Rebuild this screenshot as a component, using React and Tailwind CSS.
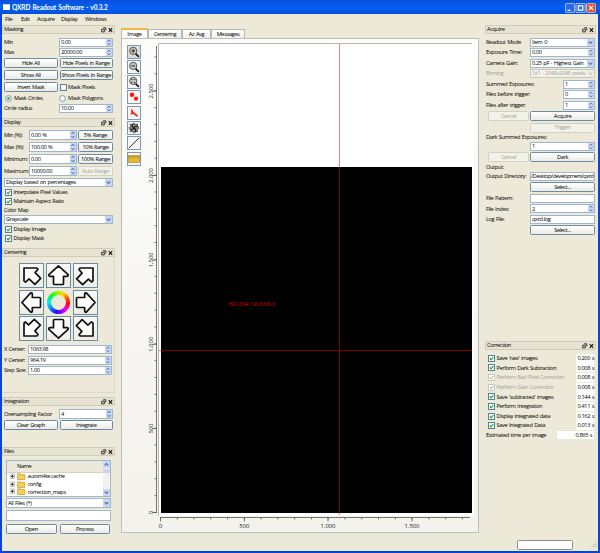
import React from "react";

const edge = "border border-[#9fb6cc]";

function Spin({ value, className = "" }) {
  return (
    <div className={`flex h-[9px] items-center bg-white ${edge} ${className}`}>
      <span className="min-w-0 flex-1 pl-px">{value}</span>
      <svg className="h-full w-[6px] shrink-0 bg-[#c6d5fa]" viewBox="0 0 6 8">
        <path d="M1.5 3 3 1.2 4.5 3M1.5 5 3 6.8 4.5 5" fill="none" stroke="#4d6185" strokeWidth="0.9" />
      </svg>
    </div>
  );
}

function Combo({ value, disabled, className = "" }) {
  return (
    <div
      className={`flex h-[9px] items-center border ${
        disabled ? "border-[#c9c7ba] bg-[#f3f2ea] text-[#a5a399]" : "border-[#9fb6cc] bg-white"
      } ${className}`}
    >
      <span className="min-w-0 flex-1 pl-px">{value}</span>
      <svg className={`h-full w-[7px] shrink-0 ${disabled ? "bg-[#eeede4]" : "bg-[#c6d5fa]"}`} viewBox="0 0 7 7">
        <path d="M1.7 2.5 3.5 4.5 5.3 2.5" fill="none" stroke={disabled ? "#c0beb0" : "#4d6185"} strokeWidth="1.1" />
      </svg>
    </div>
  );
}

function Button({ children, disabled, className = "" }) {
  return (
    <div
      className={`flex h-[10px] items-center justify-center rounded-[1.5px] border pt-px ${
        disabled
          ? "border-[#d3d0c1] bg-[#f3f2e9] text-[#a5a399]"
          : "border-[#6c8ba6] bg-gradient-to-b from-white to-[#ecebe3]"
      } ${className}`}
    >
      {children}
    </div>
  );
}

function Check({ children, checked = true, disabled, className = "" }) {
  return (
    <div className={`flex items-center gap-[1.5px] ${disabled ? "text-[#a5a399]" : ""} ${className}`}>
      <svg className="h-[7px] w-[7px] shrink-0" viewBox="0 0 7 7">
        <rect x="0.5" y="0.5" width="6" height="6" fill="#fff" stroke={disabled ? "#cbc9bb" : "#5580a0"} />
        {checked && (
          <path d="M1.8 3.4 3.1 4.8 5.3 2" fill="none" stroke={disabled ? "#bcbab0" : "#21a121"} strokeWidth="1.2" />
        )}
      </svg>
      <span>{children}</span>
    </div>
  );
}

function Radio({ children, checked, className = "" }) {
  return (
    <div className={`flex items-center gap-[2px] ${className}`}>
      <svg className="h-[7px] w-[7px] shrink-0" viewBox="0 0 7 7">
        <circle cx="3.5" cy="3.5" r="2.9" fill="#fff" stroke="#5580a0" strokeWidth="0.8" />
        {checked && <circle cx="3.5" cy="3.5" r="1.4" fill="#35b235" />}
      </svg>
      <span>{children}</span>
    </div>
  );
}

function Dock({ title, className = "", children }) {
  return (
    <section className={`flex shrink-0 flex-col ${className}`}>
      <div className="flex h-[9px] shrink-0 items-center border border-[#cfccbb] bg-[#e6e3d3] pl-px pr-[1px]">
        <span className="flex-1">{title}</span>
        <svg className="h-[6px] w-[12px]" viewBox="0 0 12 6">
          <path d="M2.2 .8H4.8V3.4M.7 2.2H3.3V4.9H.7Z" fill="none" stroke="#222" strokeWidth="0.9" />
          <path d="M7.8 1.2 11.2 4.8M11.2 1.2 7.8 4.8" stroke="#111" strokeWidth="1.1" />
        </svg>
      </div>
      {children}
    </section>
  );
}

function Arrow({ angle }) {
  return (
    <div className="flex h-[25px] w-[25px] items-center justify-center border border-[#6c8ba6] bg-gradient-to-b from-[#f8f8f5] to-[#eeede6]">
      <svg className="h-[23px] w-[23px]" viewBox="-11.5 -11.5 23 23">
        <path
          transform={`rotate(${angle})`}
          d="M0-9.6 9.6-.8Q10 .6 8.6 .8H5V8Q5 9 4 9H-4Q-5 9-5 8V.8H-8.6Q-10 .6-9.6-.8Z"
          fill="#fff"
          stroke="#111"
          strokeWidth="1.7"
          strokeLinejoin="round"
        />
      </svg>
    </div>
  );
}

function DiagonalArrow({ angle }) {
  return (
    <div className="flex h-[25px] w-[25px] items-center justify-center border border-[#6c8ba6] bg-gradient-to-b from-[#f8f8f5] to-[#eeede6]">
      <svg className="h-[23px] w-[23px]" viewBox="-11.5 -11.5 23 23">
        <path
          transform={`rotate(${angle})`}
          d="M-7.5-7.5H5.3L6.5-6.3 3.6-2.9 9.2 2.8 3.4 8.9-2.4 3.4-6 6.6-7.5 5.4Z"
          fill="#fff"
          stroke="#111"
          strokeWidth="1.7"
          strokeLinejoin="round"
        />
      </svg>
    </div>
  );
}

function Tool({ active, children }) {
  return (
    <div className={`h-[14px] w-[14px] border border-[#7c9ab5] ${active ? "bg-[#deddd3]" : "bg-[#f6f5f1]"}`}>
      <svg className="h-[12px] w-[12px]" viewBox="0 0 12 12">
        {children}
      </svg>
    </div>
  );
}

function Lens({ children }) {
  return (
    <>
      <path d="M7.3 7.3 10.8 10.8" stroke="#1a1a1a" strokeWidth="1.8" />
      <circle cx="5.2" cy="4.9" r="3.6" fill="#c9cac6" stroke="#4a4a4a" strokeWidth="0.9" />
      <g stroke="#111" strokeWidth="0.9">{children}</g>
    </>
  );
}

const yMajor = [
  [91, "2,500"],
  [175.5, "2,000"],
  [260, "1,500"],
  [344.3, "1,000"],
  [428.6, "500"],
  [512.5, "0"],
];
const yMinor = Array.from({ length: 28 }, (_, i) => 512.5 - i * 16.87);
const xMajor = [
  [160.5, "0"],
  [244.3, "500"],
  [328, "1.000"],
  [412, "1.500"],
];
const xMinor = Array.from({ length: 19 }, (_, i) => 160.5 + i * 16.77);

function Plot() {
  return (
    <svg
      className="h-[493px] w-[336px] shrink-0 tracking-[-0.1px] [word-spacing:normal]"
      viewBox="142 39 336 493"
    >
      <rect x="159" y="44" width="315" height="472" fill="#fff" />
      <path d="M158.5 516V43.5H472" fill="none" stroke="#b9b8ae" />
      <rect x="161" y="167" width="311" height="346" fill="#000" />
      <g stroke="#55544f" strokeWidth="0.8">
        <path d="M156.5 46V513M160.5 517.5H470" fill="none" />
        {yMinor.map((y) => (
          <path key={y} d={`M154.5 ${y}H156.5`} />
        ))}
        {yMajor.map(([y]) => (
          <path key={y} d={`M152.5 ${y}H156.5`} />
        ))}
        {xMinor.map((x) => (
          <path key={x} d={`M${x} 517.5V519.5`} />
        ))}
        {xMajor.map(([x]) => (
          <path key={x} d={`M${x} 517.5V521.5`} />
        ))}
      </g>
      <g fill="#222" fontSize="6" textAnchor="middle">
        {yMajor.map(([y, t]) => (
          <text key={t} transform={`translate(153.3 ${y}) rotate(-90)`}>
            {t}
          </text>
        ))}
        {xMajor.map(([x, t]) => (
          <text key={t} x={x} y="527.5">
            {t}
          </text>
        ))}
      </g>
      <path d="M339.5 44V167" stroke="#f08484" />
      <path d="M339.5 167V513M161 350.5H472" stroke="#7d0000" />
      <path d="M339.5 513V515M159 350.5H161" stroke="#f08484" />
      <text x="228" y="306" className="tracking-normal" fill="#d80000" fontSize="5.7" textLength="47.5">
        390.804, 1203.68, 0
      </text>
    </svg>
  );
}

function Tab({ children, className = "" }) {
  return (
    <div
      className={`flex h-[9px] items-center justify-center border border-b-0 border-[#b5b9b4] bg-gradient-to-b from-white to-[#f0efe8] pt-px ${className}`}
    >
      {children}
    </div>
  );
}

function Folder({ name }) {
  return (
    <div className="flex h-[7.6px] items-center pl-[3px]">
      <svg className="h-[7px] w-[16px] shrink-0" viewBox="0 0 16 7">
        <path d="M0 1H4.4V5.6H0Z" fill="#fff" stroke="#999" strokeWidth="0.6" />
        <path d="M.8 3.3H3.8M2.3 1.8V4.8" stroke="#111" strokeWidth="0.9" />
        <path d="M7.6 6.5V.8H10.3L11.3 1.6H14.9V6.5Z" fill="#f3cf5d" stroke="#c89a2c" strokeWidth="0.7" />
      </svg>
      <span className="pl-[1.5px]">{name}</span>
    </div>
  );
}

const corrections = [
  ["Save 'raw' images", "0.200 s"],
  ["Perform Dark Subtraction", "0.008 s"],
  ["Perform Bad Pixel Correction", "0.008 s", true],
  ["Perform Gain Correction", "0.008 s", true],
  ["Save 'subtracted' images", "0.144 s"],
  ["Perform Integration", "0.411 s"],
  ["Display integrated data", "0.162 s"],
  ["Save Integrated Data", "0.013 s"],
];

export default function App() {
  return (
    <div className="flex h-[553px] w-[600px] flex-col overflow-hidden whitespace-nowrap bg-[#ece9d8] font-['Open_Sans','DejaVu_Sans',sans-serif] text-[5.7px] leading-none tracking-[-0.4px] text-black [word-spacing:0.6px]">
      <header className="flex h-[14px] shrink-0 items-center bg-gradient-to-b from-[#0a4fd8] via-[#0360f2] to-[#0550dd] pl-[3px] pr-[4px]">
        <svg className="h-[6px] w-[7px]" viewBox="0 0 7 6">
          <rect width="7" height="6" fill="#fff" />
          <rect width="7" height="1" fill="#bcd4ff" />
        </svg>
        <span className="flex-1 pl-[2px] pt-[2px] font-['Lato','DejaVu_Sans',sans-serif] text-[6.5px] font-bold tracking-[-0.07px] text-white">
          QXRD Readout Software - v0.3.2
        </span>
        <svg className="mt-[2px] h-[10px] w-[31px]" viewBox="0 0 31 10">
          <g stroke="#dfe9ff" strokeWidth="0.7">
            <rect x="0.4" y="0.4" width="9.2" height="9.2" rx="1" fill="#2d68e8" />
            <rect x="11" y="0.4" width="9.2" height="9.2" rx="1" fill="#2d68e8" />
            <rect x="21.5" y="0.4" width="9.2" height="9.2" rx="1" fill="#e2502c" />
          </g>
          <path d="M2.5 7.3H5.5M13.4 2.9H17.8V7.2H13.4ZM23.9 2.7 28.3 7.2M28.3 2.7 23.9 7.2" fill="none" stroke="#fff" strokeWidth="1.2" />
        </svg>
      </header>

      <div className="flex min-h-0 flex-1 flex-col border-x-2 border-b-2 border-[#0a46d6]">
        <nav className="flex h-[11px] shrink-0 items-center">
          <span className="w-[15px] pl-[3px]">File</span>
          <span className="w-[20px] pl-[4px]">Edit</span>
          <span className="w-[24px] pl-0">Acquire</span>
          <span className="w-[24px]">Display</span>
          <span>Windows</span>
        </nav>

        <main className="flex h-[513px] shrink-0">
          <aside className="flex w-[113px] shrink-0 flex-col [&_span]:pt-px">
            <Dock title="Masking" className="h-[93px]">
              <div className="flex flex-col pl-[2px] pr-[2px] pt-[3px]">
                <div className="flex h-[10px] items-center">
                  <span className="w-[55px]">Min</span>
                  <Spin value="0.00" className="flex-1" />
                </div>
                <div className="flex h-[11px] items-center">
                  <span className="w-[55px]">Max</span>
                  <Spin value="20000.00" className="flex-1" />
                </div>
                <div className="grid grid-cols-2 gap-x-[2px] gap-y-[2px]">
                  <Button>Hide All</Button>
                  <Button>Hide Pixels in Range</Button>
                  <Button>Show All</Button>
                  <Button>Show Pixels In Range</Button>
                  <Button>Invert Mask</Button>
                  <Check checked={false}>Mask Pixels</Check>
                </div>
                <div className="flex h-[12px] items-center pl-[1px]">
                  <Radio checked className="w-[54px]">
                    Mask Circles
                  </Radio>
                  <Radio>Mask Polygons</Radio>
                </div>
                <div className="flex h-[9px] items-center">
                  <span className="w-[55px]">Circle radius</span>
                  <Spin value="10.00" className="flex-1" />
                </div>
              </div>
            </Dock>

            <Dock title="Display" className="h-[130px]">
              <div className="flex flex-col pl-[2px] pr-[2px] pt-[3px]">
                <div className="grid grid-cols-[24px_48px_35px] items-center gap-x-px gap-y-[2px]">
                  <span>Min (%):</span>
                  <Spin value="0.00 %" className="h-[10px]" />
                  <Button>5% Range</Button>
                  <span>Max (%):</span>
                  <Spin value="100.00 %" className="h-[10px]" />
                  <Button>10% Range</Button>
                  <span>Minimum:</span>
                  <Spin value="0.00" className="h-[10px]" />
                  <Button>100% Range</Button>
                  <span>Maximum:</span>
                  <Spin value="10000.00" className="h-[10px]" />
                  <Button disabled>Auto Range</Button>
                </div>
                <Combo value="Display based on percentages" className="mt-[2px]" />
                <Check className="h-[10px] pl-[1px]">Interpolate Pixel Values</Check>
                <Check className="h-[9px] pl-[1px]">Maintain Aspect Ratio</Check>
                <span className="flex h-[9px] items-center">Color Map</span>
                <Combo value="Grayscale" />
                <Check className="h-[10px] pl-[1px]">Display Image</Check>
                <Check className="h-[9px] pl-[1px]">Display Mask</Check>
              </div>
            </Dock>

            <Dock title="Centering" className="h-[149px]">
              <div className="flex h-[136px] flex-col border-b border-r border-[#dcd9c8] pl-[2px] pr-[2px] pt-[6px]">
                <div className="ml-[15px] grid w-[79px] grid-cols-3 gap-x-[2px] gap-y-[1.5px]">
                  <DiagonalArrow angle={0} />
                  <Arrow angle={0} />
                  <DiagonalArrow angle={90} />
                  <Arrow angle={-90} />
                  <div className="flex items-center justify-center">
                    <div className="flex h-[23px] w-[23px] items-center justify-center rounded-full bg-[conic-gradient(#b4f000,#ffd800_30deg,#ff6000_60deg,#ff0020_95deg,#ff00c8_130deg,#a000ff_160deg,#2010ff_195deg,#0090ff_235deg,#00f0f0_270deg,#00f060_305deg,#30ff00_330deg,#b4f000)]">
                      <div className="h-[15px] w-[15px] rounded-full bg-[#ece9d8]" />
                    </div>
                  </div>
                  <Arrow angle={90} />
                  <DiagonalArrow angle={-90} />
                  <Arrow angle={180} />
                  <DiagonalArrow angle={180} />
                </div>
                <div className="mt-[4px] flex flex-col gap-[1.5px]">
                  <div className="flex items-center">
                    <span className="w-[24px]">X Center:</span>
                    <Spin value="1063.98" className="flex-1" />
                  </div>
                  <div className="flex items-center">
                    <span className="w-[24px]">Y Center:</span>
                    <Spin value="964.19" className="flex-1" />
                  </div>
                  <div className="flex items-center">
                    <span className="w-[24px]">Step Size:</span>
                    <Spin value="1.00" className="flex-1" />
                  </div>
                </div>
              </div>
            </Dock>

            <Dock title="Integration" className="h-[50px]">
              <div className="flex flex-col pl-[2px] pr-[2px] pt-[3px]">
                <div className="flex h-[10px] items-center">
                  <span className="w-[55px]">Oversampling Factor</span>
                  <Spin value="4" className="h-[10px] flex-1" />
                </div>
                <div className="mt-[1px] grid grid-cols-2 gap-x-[2px]">
                  <Button>Clear Graph</Button>
                  <Button>Integrate</Button>
                </div>
              </div>
            </Dock>

            <Dock title="Files" className="h-[90px]">
              <div className="flex flex-col pl-[4px] pr-[4px] pt-[4px]">
                <div className={`flex h-[37px] bg-white ${edge}`}>
                  <div className="flex min-w-0 flex-1 flex-col">
                    <div className="flex h-[12px] shrink-0 items-center border-b border-[#d6d2c2] bg-[#ece9d8] pl-[10px] pt-px">
                      Name
                    </div>
                    <Folder name="autom4te.cache" />
                    <Folder name="config" />
                    <Folder name="correction_maps" />
                  </div>
                  <svg className="h-[35px] w-[7px] shrink-0 bg-[#f2f1ec]" viewBox="0 0 7 35">
                    <rect width="7" height="7" fill="#c6d5fa" />
                    <rect y="8" width="7" height="4" fill="#c6d5fa" />
                    <rect y="28" width="7" height="7" fill="#c6d5fa" />
                    <path d="M1.7 4.5 3.5 2.5 5.3 4.5M1.7 30.5 3.5 32.5 5.3 30.5" fill="none" stroke="#4d6185" strokeWidth="1.1" />
                  </svg>
                </div>
                <Combo value="All Files (*)" className="mt-[1px] h-[10px]" />
                <div className={`mt-[2px] h-[11px] bg-white ${edge}`} />
                <div className="mt-[3px] grid grid-cols-2 gap-x-[3px] pr-px">
                  <Button>Open</Button>
                  <Button>Process</Button>
                </div>
              </div>
            </Dock>
          </aside>

          <section className="ml-[6px] flex w-[358px] shrink-0 flex-col pt-[3px]">
            <div className="flex h-[10px] shrink-0 items-end">
              <div className="flex h-[11px] w-[27px] items-center justify-center self-start border border-b-0 border-t-2 border-[#b5b9b4] border-t-[#f5b547] bg-[#fcfcfa]">
                Image
              </div>
              <Tab className="w-[34px]">Centering</Tab>
              <Tab className="w-[29px]">Az Avg</Tab>
              <Tab className="w-[34px]">Messages</Tab>
            </div>
            <div className="flex h-[495px] shrink-0 border border-[#b9bfba] bg-gradient-to-b from-[#fcfcfb] to-[#f3f2ed]">
              <div className="flex w-[20px] flex-col gap-[1.3px] pl-[5px] pt-[5.5px]">
                <Tool active>
                  <Lens>
                    <path d="M3.4 4.9H7M5.2 3.1V6.7" />
                  </Lens>
                </Tool>
                <Tool>
                  <Lens>
                    <path d="M3.4 4.9H7" />
                  </Lens>
                </Tool>
                <Tool>
                  <Lens>
                    <path d="M3.3 3.5H4.5M5.9 3.5H7.1M3.3 6.3H4.5M5.9 6.3H7.1" />
                  </Lens>
                </Tool>
                <Tool>
                  <circle cx="4" cy="3.8" r="2.2" fill="#f11" />
                  <circle cx="8" cy="7.7" r="2.1" fill="#f11" />
                </Tool>
                <Tool>
                  <path d="M3.3 2.5 4.7 5.4 9.6 9.2M4.7 5.4 3 7.3" fill="none" stroke="#f11" strokeWidth="1.7" />
                </Tool>
                <Tool>
                  <path
                    d="M6 .8 7 2.5 9.6 2 9.3 4.7 11.2 6 9.4 7.2 9.7 9.8 7.2 9.4 6 11.2 4.8 9.4 2.2 9.8 2.7 7.2 .8 6 2.6 4.8 2.2 2.2 4.8 2.7Z"
                    fill="#8a8a85"
                    stroke="#3a3a36"
                    strokeWidth="0.7"
                  />
                  <path
                    d="M6 6Q3.5 5 4.6 1.8M6 6Q7 3.5 10.2 4.6M6 6Q8.5 7 7.4 10.2M6 6Q5 8.5 1.8 7.4"
                    fill="none"
                    stroke="#111"
                    strokeWidth="1.1"
                  />
                </Tool>
                <Tool>
                  <path d="M.8 11.2 11.2 .8" stroke="#222" strokeWidth="0.9" />
                </Tool>
                <Tool>
                  <rect x="0.4" y="2.6" width="11.2" height="7" fill="#e2b932" stroke="#a88724" strokeWidth="0.6" />
                  <path d="M2 3V5M4 3V4.5M6 3V5M8 3V4.5M10 3V5" stroke="#77601a" strokeWidth="0.6" />
                </Tool>
              </div>
              <Plot />
            </div>
          </section>

          <aside className="ml-[6px] flex w-[111px] shrink-0 flex-col [&_span]:pt-px">
            <Dock title="Acquire" className="h-[316px]">
              <div className="grid grid-cols-[43px_65px] items-center gap-x-[1px] gap-y-[1.5px] pl-[1px] pt-[3.5px]">
                <span>Readout Mode</span>
                <Combo value="Item 0" />
                <span>Exposure Time:</span>
                <Spin value="0.00" />
                <span>Camera Gain:</span>
                <Combo value="0.25 pF - Highest Gain" />
                <span className="text-[#a5a399]">Binning:</span>
                <Combo value="1x1 - 2048x2048 pixels" disabled />
                <span>Summed Exposures:</span>
                <Spin value="1" className="ml-[33px]" />
                <span>Files before trigger:</span>
                <Spin value="0" className="ml-[33px]" />
                <span>Files after trigger:</span>
                <Spin value="1" className="ml-[33px]" />
                <Button disabled className="ml-[2px] w-[41px]">
                  Cancel
                </Button>
                <Button>Acquire</Button>
                <span />
                <Button disabled>Trigger</Button>
              </div>
              <span className="mt-px flex h-[8.5px] items-center pl-[1px]">Dark Summed Exposures:</span>
              <div className="grid grid-cols-[43px_65px] items-center gap-x-[1px] gap-y-[1.4px] pl-[1px]">
                <span />
                <Spin value="1" />
                <Button disabled className="ml-[2px] w-[41px]">
                  Cancel
                </Button>
                <Button>Dark</Button>
              </div>
              <span className="flex h-[9.5px] items-center pl-[1px]">Output:</span>
              <div className="grid grid-cols-[43px_65px] items-center gap-x-[1px] gap-y-[1.5px] pl-[1px]">
                <span>Output Directory:</span>
                <div className={`flex h-[9px] items-center bg-white ${edge}`}>
                  <span className="tracking-[-0.52px]">/Desktop/development/qxrd</span>
                </div>
                <span />
                <Button>Select...</Button>
                <span>File Pattern:</span>
                <div className={`h-[9px] bg-white ${edge}`} />
                <span>File Index:</span>
                <Spin value="2" />
                <span>Log File:</span>
                <div className={`flex h-[9px] items-center bg-white pl-px ${edge}`}>
                  <span>qxrd.log</span>
                </div>
                <span />
                <Button>Select...</Button>
              </div>
            </Dock>

            <Dock title="Correction">
              <div className="flex flex-col pl-[1px] pr-[2px] pt-[3.5px]">
                {corrections.map(([name, time, off]) => (
                  <div key={name} className="flex h-[9.65px] items-center justify-between pl-[2px]">
                    <Check disabled={off}>{name}</Check>
                    <span className="flex h-[9px] w-[18px] items-center justify-end bg-white">{time}</span>
                  </div>
                ))}
                <div className="flex h-[9.5px] items-center justify-between">
                  <span>Estimated time per image</span>
                  <span className="flex h-[8px] w-[37px] items-center justify-end bg-white pr-[2px]">0.865 s</span>
                </div>
              </div>
            </Dock>
          </aside>
        </main>

        <footer className="flex flex-1 items-center justify-end pr-[1px] pt-[1px]">
          <div className="mr-[18px] h-[10px] w-[56px] rounded-[1.5px] border border-[#8d8c85] bg-white" />
          <svg className="h-[6px] w-[6px]" viewBox="0 0 6 6">
            <path d="M4.5 .5H5.5M2.5 2.5H3.5M4.5 2.5H5.5M.5 4.5H1.5M2.5 4.5H3.5M4.5 4.5H5.5" stroke="#aaa796" />
          </svg>
        </footer>
      </div>
    </div>
  );
}
